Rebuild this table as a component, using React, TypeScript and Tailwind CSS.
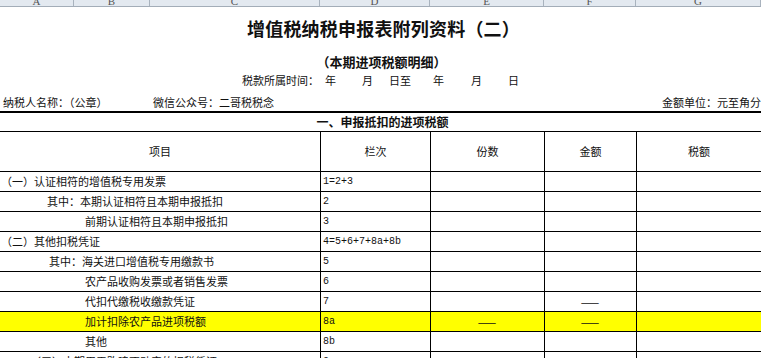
const colHeads = [
  { label: 'A', cls: 'w-[74px]' },
  { label: 'B', cls: 'w-[76px]' },
  { label: 'C', cls: 'w-[170px]' },
  { label: 'D', cls: 'w-[110px]' },
  { label: 'E', cls: 'w-[114px]' },
  { label: 'F', cls: 'w-[92px]' },
  { label: 'G', cls: 'w-[125px]' },
];

interface Row {
  item: string;
  indent: string;
  no: string;
  count?: string;
  amount?: string;
  highlight?: boolean;
}

const rows: Row[] = [
  { item: '（一）认证相符的增值税专用发票', indent: 'pl-[1px]', no: '1=2+3' },
  { item: '其中：本期认证相符且本期申报抵扣', indent: 'pl-[47px]', no: '2' },
  { item: '前期认证相符且本期申报抵扣', indent: 'pl-[85px]', no: '3' },
  { item: '（二）其他扣税凭证', indent: 'pl-[1px]', no: '4=5+6+7+8a+8b' },
  { item: '其中：海关进口增值税专用缴款书', indent: 'pl-[49px]', no: '5' },
  { item: '农产品收购发票或者销售发票', indent: 'pl-[85px]', no: '6' },
  { item: '代扣代缴税收缴款凭证', indent: 'pl-[85px]', no: '7', amount: '——' },
  { item: '加计扣除农产品进项税额', indent: 'pl-[85px]', no: '8a', count: '——', amount: '——', highlight: true },
  { item: '其他', indent: 'pl-[85px]', no: '8b' },
  { item: '（三）本期用于购建不动产的扣税凭证', indent: 'pl-[30px]', no: '9' },
];

const cell = 'h-[20px] border-b border-black flex items-center';

export default function App() {
  return (
    <div className="w-[761px] h-[358px] overflow-hidden bg-white text-[#111] font-['Noto_Sans_CJK_SC','Liberation_Sans',sans-serif] text-[11px]">
      {/* column letters, mostly scrolled out of view */}
      <div className="flex h-[7px] overflow-hidden bg-[#e3e9f0] border-b border-[#a3adb8]">
        {colHeads.map((c) => (
          <div key={c.label} className={`${c.cls} shrink-0 border-r border-[#a9b3be] text-center`}>
            <div className="-mt-[5px] leading-[12px] text-[11px] text-[#555] font-['Liberation_Serif',serif]">{c.label}</div>
          </div>
        ))}
      </div>

      <div className="h-[42px] flex items-center justify-center pl-[6px]">
        <h1 className="text-[18px] leading-[20px] font-bold tracking-[0.2px]">增值税纳税申报表附列资料（二）</h1>
      </div>
      <div className="h-[25px] flex items-center justify-center pl-[2px]">
        <div className="text-[13px] leading-[14px] font-bold">（本期进项税额明细）</div>
      </div>
      <div className="h-[13px] flex items-center pl-[242px] leading-[13px]">
        <span>税款所属时间：</span>
        <span className="ml-[6px]">年</span>
        <span className="ml-[26px]">月</span>
        <span className="ml-[16px]">日至</span>
        <span className="ml-[22px]">年</span>
        <span className="ml-[27px]">月</span>
        <span className="ml-[26px]">日</span>
      </div>
      <div className="h-[26px] flex items-end pb-[2px] border-b-2 border-black leading-[14px]">
        <span className="pl-[3px] w-[153px]">纳税人名称：（公章）</span>
        <span>微信公众号：二哥税税念</span>
        <span className="ml-auto">金额单位：元至角分</span>
      </div>
      <div className="h-[18px] flex items-center justify-center pl-[4px]">
        <div className="text-[12px] leading-[14px] font-bold">一、申报抵扣的进项税额</div>
      </div>

      <div className="grid grid-cols-[321px_110px_114px_92px_124px] border-t border-black">
        <div className="h-[40px] border-b border-r border-black flex items-center justify-center">项目</div>
        <div className="h-[40px] border-b border-r border-black flex items-center justify-center">栏次</div>
        <div className="h-[40px] border-b border-r border-black flex items-center justify-center">份数</div>
        <div className="h-[40px] border-b border-r border-black flex items-center justify-center">金额</div>
        <div className="h-[40px] border-b border-black flex items-center justify-center">税额</div>

        {rows.map((r) => {
          const bg = r.highlight ? 'bg-[#ffff00]' : 'bg-white';
          return (
            <div key={r.no} className="contents">
              <div className={`${cell} ${bg} ${r.indent} border-r`}>{r.item}</div>
              <div className={`${cell} ${bg} border-r pl-[2px] font-['Liberation_Mono',monospace] text-[10px]`}>{r.no}</div>
              <div className={`${cell} ${bg} border-r justify-center tracking-[1px] pt-[2px]`}>{r.count}</div>
              <div className={`${cell} ${bg} border-r justify-center tracking-[1px] pt-[2px]`}>{r.amount}</div>
              <div className={`${cell} ${bg}`}></div>
            </div>
          );
        })}
      </div>
    </div>
  );
}
